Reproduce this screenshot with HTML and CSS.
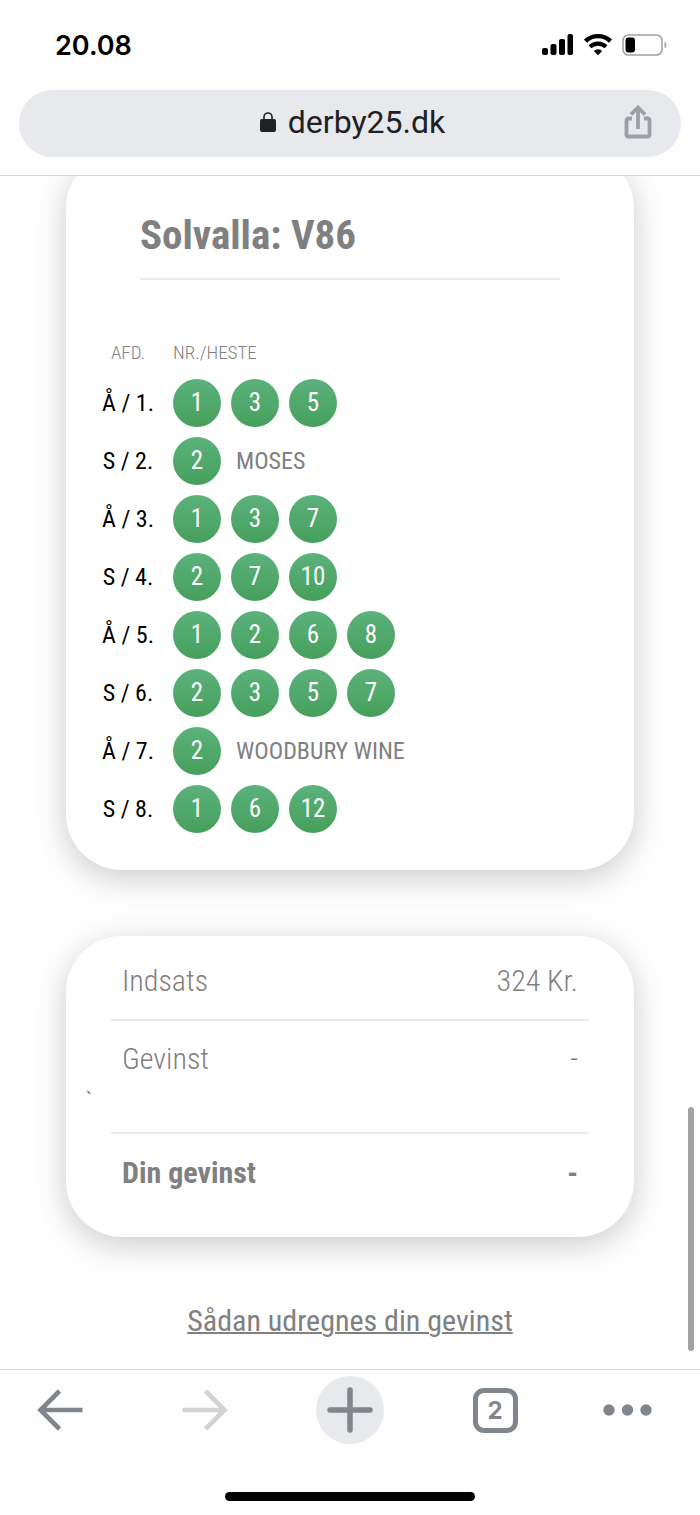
FILE: index.html
```html
<!doctype html>
<html lang="da">
<head>
    <meta charset="UTF-8">
    <meta name="viewport" content="width=device-width, initial-scale=1">
    <title>derby25.dk</title>
    <link rel="stylesheet" href="styles.css">
</head>
<body>
<header class="top">
    <div class="status">
        <span class="time">20.08</span>
        <div class="status-icons">
            <svg width="32" height="22" viewBox="0 0 32 22">
                <rect x="0" y="14" width="6" height="7" rx="2"/>
                <rect x="8.500" y="10" width="6" height="11" rx="2"/>
                <rect x="17" y="5" width="6" height="16" rx="2"/>
                <rect x="25.500" y="0" width="5.500" height="21" rx="2"/>
            </svg>
            <svg width="30" height="22" viewBox="0 0 30 22">
                <path d="M2.500 7.200A18 18 0 0 1 27.500 7.200" fill="none" stroke="#000" stroke-width="4.400"/>
                <path d="M7 12.800A11.500 11.500 0 0 1 23 12.800" fill="none" stroke="#000" stroke-width="4.200"/>
                <path d="M10.800 17a6 6 0 0 1 8.400 0L15 21.300z"/>
            </svg>
            <svg width="46" height="22" viewBox="0 0 46 22">
                <rect x="1" y="1" width="39" height="20" rx="5.500" fill="none" stroke="#a3a3a3" stroke-width="1.600"/>
                <rect x="3.500" y="3.500" width="9.500" height="15" rx="3"/>
                <path d="M42.500 7.500q2 1 2 3.500t-2 3.500z" fill="#a3a3a3"/>
            </svg>
        </div>
    </div>
    <div class="address">
        <button class="url" type="button">
            <svg width="16" height="20" viewBox="0 0 16 20">
                <rect x="0" y="7" width="16" height="13" rx="2" fill="#202124"/>
                <path d="M4 8V5a4 4 0 0 1 8 0v3" fill="none" stroke="#202124" stroke-width="1.600"/>
            </svg>
            derby25.dk
        </button>
        <button class="share" type="button" aria-label="Del">
            <svg width="28" height="34" viewBox="0 0 28 34" fill="none" stroke="#9aa0a6" stroke-width="3.800">
                <path d="M8 13.500H4.500q-2 0-2 2v14q0 2 2 2h19q2 0 2-2v-14q0-2-2-2H20"/>
                <path d="M14 24V3M7 9.500l7-7 7 7"/>
            </svg>
        </button>
    </div>
</header>

<main class="page">
    <section class="card coupon">
        <h1>Solvalla: V86</h1>
        <table>
            <thead>
            <tr><th>AFD.</th><th class="horses">NR./HESTE</th></tr>
            </thead>
            <tbody>
            <tr><td>Å / 1.</td><td><div class="picks"><b>1</b><b>3</b><b>5</b></div></td></tr>
            <tr><td>S / 2.</td><td><div class="picks"><b>2</b><span>MOSES</span></div></td></tr>
            <tr><td>Å / 3.</td><td><div class="picks"><b>1</b><b>3</b><b>7</b></div></td></tr>
            <tr><td>S / 4.</td><td><div class="picks"><b>2</b><b>7</b><b>10</b></div></td></tr>
            <tr><td>Å / 5.</td><td><div class="picks"><b>1</b><b>2</b><b>6</b><b>8</b></div></td></tr>
            <tr><td>S / 6.</td><td><div class="picks"><b>2</b><b>3</b><b>5</b><b>7</b></div></td></tr>
            <tr><td>Å / 7.</td><td><div class="picks"><b>2</b><span>WOODBURY WINE</span></div></td></tr>
            <tr><td>S / 8.</td><td><div class="picks"><b>1</b><b>6</b><b>12</b></div></td></tr>
            </tbody>
        </table>
    </section>

    <section class="card result">
        <div class="line stake"><span>Indsats</span><span>324 Kr.</span></div>
        <div class="line"><span>Gevinst</span><span>-</span></div>
        <p class="tick">`</p>
        <div class="line total"><span>Din gevinst</span><span>-</span></div>
    </section>

    <a class="help" href="#">Sådan udregnes din gevinst</a>
    <div class="scrollbar"></div>
</main>

<footer class="bottom">
    <nav class="tools">
        <button type="button" aria-label="Tilbage">
            <svg width="46" height="42" viewBox="0 0 46 42" fill="none" stroke="#80868b" stroke-width="4.600">
                <path d="M45.500 21H4M22.500 2l-19 19 19 19"/>
            </svg>
        </button>
        <button type="button" aria-label="Frem">
            <svg width="46" height="42" viewBox="0 0 46 42" fill="none" stroke="#d3d3d3" stroke-width="4.600">
                <path d="M.5 21H42M23.500 2l19 19-19 19"/>
            </svg>
        </button>
        <button class="new-tab" type="button" aria-label="Ny fane">
            <svg width="46" height="46" viewBox="0 0 46 46" stroke="#80868b" stroke-width="5.500" stroke-linecap="round">
                <path d="M23 3v40M3 23h40"/>
            </svg>
        </button>
        <button type="button" aria-label="Faner"><span class="tabs">2</span></button>
        <button class="more" type="button" aria-label="Mere">
            <svg width="49" height="12" viewBox="0 0 49 12" fill="#80868b">
                <circle cx="6" cy="6" r="5.700"/>
                <circle cx="24.500" cy="6" r="5.700"/>
                <circle cx="43" cy="6" r="5.700"/>
            </svg>
        </button>
    </nav>
    <div class="home"></div>
</footer>
</body>
</html>
```

FILE: styles.css
```css
*{
    margin: 0;
    padding: 0;
    box-sizing: border-box;
}
body{
    min-height: 100vh;
    display: flex;
    flex-direction: column;
    background: #fefefe;
    color: #808080;
    font-family: "Roboto Condensed", "Liberation Sans Narrow", Roboto, sans-serif;
}
button{
    border: 0;
    background: none;
    font: inherit;
    display: flex;
    align-items: center;
    justify-content: center;
}
svg{
    display: block;
    flex-shrink: 0;
}

/* browser top */
.top{
    padding-bottom: 18px;
    border-bottom: 1px solid #d8d8d8;
    font-family: Inter, sans-serif;
}
.status{
    height: 90px;
    padding: 0 32px 0 55px;
    display: flex;
    align-items: center;
    justify-content: space-between;
}
.time{
    color: #000;
    font-size: 27px;
    font-weight: 600;
}
.status-icons{
    display: flex;
    gap: 9px;
}
.address{
    height: 67px;
    margin: 0 19px;
    padding: 0 29px;
    border-radius: 34px;
    background: #e8e9ed;
    display: grid;
    grid-template-columns: 1fr auto 1fr;
    align-items: center;
}
.url{
    grid-column: 2;
    gap: 12px;
    padding: 0 0 4px 5px;
    color: #202124;
    font-family: Roboto, sans-serif;
    font-size: 32px;
}
.share{
    justify-self: end;
    padding-bottom: 3px;
}

/* page */
.page{
    flex: 1;
    position: relative;
    overflow: hidden;
    padding: 0 66px 28px;
    display: flex;
    flex-direction: column;
}
.card{
    border-radius: 56px;
    background: #fff;
    box-shadow: 0 8px 32px rgba(0, 0, 0, .2);
}
.coupon{
    margin-top: -24px;
    padding: 59px 26px 32px;
}
.coupon h1{
    margin: 0 48px 52px;
    padding-bottom: 19px;
    border-bottom: 2px solid #ebebeb;
    font-size: 41px;
    line-height: 48px;
}
table{
    width: 100%;
    border-collapse: collapse;
}
th{
    height: 42px;
    padding-bottom: 2px;
    font-size: 19px;
    font-weight: 300;
}
th:first-child{
    width: 72px;
}
th.horses{
    text-align: left;
}
th.horses, td + td{
    padding-left: 9px;
}
td{
    height: 58px;
    font-size: 24px;
    text-align: center;
    color: #000;
    white-space: nowrap;
}
.picks{
    display: flex;
    align-items: center;
    gap: 10px;
}
.picks b{
    width: 48px;
    height: 48px;
    border-radius: 50%;
    background: linear-gradient(#5cb27c, #469f5c);
    color: #fff;
    font-size: 25px;
    font-weight: 400;
    line-height: 48px;
}
.picks span{
    padding-left: 5px;
    color: #808080;
}
.result{
    margin-top: 66px;
    padding: 25px 45px 44px;
    font-size: 30px;
    font-weight: 300;
    line-height: 40px;
}
.line{
    padding: 0 11px;
    display: flex;
    justify-content: space-between;
}
.stake{
    margin-bottom: 18px;
    padding-bottom: 18px;
    border-bottom: 2px solid #ebebeb;
}
.tick{
    height: 53px;
    margin-left: -25px;
    font-size: 20px;
    font-weight: 400;
}
.total{
    padding-top: 19px;
    border-top: 2px solid #ebebeb;
    font-weight: 700;
}
.help{
    align-self: center;
    margin-top: 64px;
    color: #808080;
    font-size: 30px;
    line-height: 40px;
    text-decoration-thickness: 2px;
}
.scrollbar{
    position: absolute;
    right: 6px;
    bottom: 18px;
    width: 6px;
    height: 244px;
    border-radius: 3px;
    background: #a3a3a3;
}

/* browser bottom */
.bottom{
    padding: 6px 0 15px;
    border-top: 1px solid #d8d8d8;
}
.tools{
    padding: 0 52px 0 26px;
    display: flex;
    justify-content: space-between;
}
.tools button{
    width: 68px;
    height: 68px;
}
.tools .new-tab{
    border-radius: 50%;
    background: #e8e9ed;
}
.tools .more{
    width: 42px;
}
.tabs{
    width: 45px;
    height: 45px;
    border: 5px solid #80868b;
    border-radius: 11px;
    color: #80868b;
    font: 700 24px/35px Inter, sans-serif;
}
.home{
    width: 250px;
    height: 9px;
    margin: 48px auto 0;
    border-radius: 5px;
    background: #000;
}
```
